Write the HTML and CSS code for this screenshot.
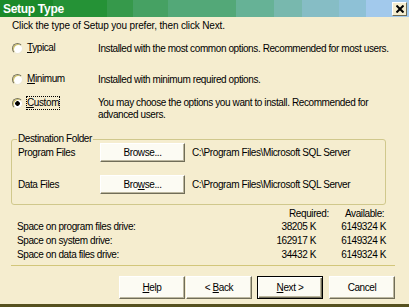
FILE: index.html
```html
<!DOCTYPE html>
<html lang="en">
<head>
    <meta charset="UTF-8">
    <title>Setup Type</title>
    <link rel="stylesheet" href="styles.css">
</head>
<body>
    <div class="window">
        <div class="titlebar">
            <span class="title">Setup Type</span>
            <span class="close-btn">
                <svg width="8" height="8" viewBox="0 0 8 8"><path d="M0.5 0.5L7.5 7.5M7.5 0.5L0.5 7.5" stroke="#000" stroke-width="2"/></svg>
            </span>
        </div>

        <div class="content">
            <p class="intro">Click the type of Setup you prefer, then click Next.</p>

            <div class="options">
                <div class="option opt-typical">
                    <span class="choice"><span class="radio"></span><span><u>T</u>ypical</span></span>
                    <p class="desc">Installed with the most common options. Recommended for most users.</p>
                </div>
                <div class="option opt-minimum">
                    <span class="choice"><span class="radio"></span><span><u>M</u>inimum</span></span>
                    <p class="desc">Installed with minimum required options.</p>
                </div>
                <div class="option opt-custom">
                    <span class="choice"><span class="radio on"></span><span class="focus"><u>C</u>ustom</span></span>
                    <p class="desc">You may choose the options you want to install. Recommended for<br>advanced users.</p>
                </div>
            </div>

            <fieldset class="dest">
                <legend>Destination Folder</legend>
                <div class="folders">
                    <div class="folder-row">
                        <span>Program Files</span>
                        <button class="btn browse">Browse...</button>
                        <span class="path">C:\Program Files\Microsoft SQL Server</span>
                    </div>
                    <div class="folder-row">
                        <span>Data Files</span>
                        <button class="btn browse">Bro<u>w</u>se...</button>
                        <span class="path">C:\Program Files\Microsoft SQL Server</span>
                    </div>
                </div>
            </fieldset>

            <div class="space-head">
                <span class="head-req">Required:</span>
                <span>Available:</span>
            </div>
            <div class="space">
                <span>Space on program files drive:</span><span class="num">38205 K</span><span class="num">6149324 K</span>
                <span>Space on system drive:</span><span class="num">162917 K</span><span class="num">6149324 K</span>
                <span>Space on data files drive:</span><span class="num">34432 K</span><span class="num">6149324 K</span>
            </div>

            <div class="separator"></div>

            <div class="buttons">
                <button class="btn"><u>H</u>elp</button>
                <button class="btn btn-back">&lt; <u>B</u>ack</button>
                <button class="btn btn-next btn-default"><u>N</u>ext &gt;</button>
                <button class="btn btn-cancel">Cancel</button>
            </div>
        </div>
    </div>
</body>
</html>
```

FILE: styles.css
```css
*{
    padding: 0;
    margin: 0;
    box-sizing: border-box;
}
body{
    width: 409px;
    height: 307px;
    overflow: hidden;
    background-color: #f5edcf;
    font-family: "Liberation Sans", Arial, sans-serif;
    font-size: 10px;
    letter-spacing: -0.4px;
    color: #000;
}

.window{
    height: 307px;
    display: flex;
    flex-direction: column;
    border-bottom: 3px solid #56511f;
}

.titlebar{
    height: 17px;
    flex-shrink: 0;
    display: flex;
    justify-content: space-between;
    align-items: center;
    padding: 0 2px 0 3px;
    background: linear-gradient(to right,
        #1b8a2a 0 53px, #259236 53px 107px, #36994b 107px 133px,
        #46a163 133px 168px, #53a878 168px 236px, #66b296 236px 274px,
        #78b8ae 274px 302px, #86bdc5 302px 339px, #8ec1d6 339px 366px,
        #a2c9ec 366px);
}

.title{
    color: white;
    font-weight: bold;
    font-size: 12px;
    letter-spacing: -0.3px;
}

.close-btn{
    width: 15px;
    height: 14px;
    background-color: #f5edcf;
    border: 1px solid;
    border-color: #fff #6d6a55 #6d6a55 #fff;
    display: flex;
    justify-content: center;
    align-items: center;
}

.content{
    flex: 1;
    padding-left: 12px;
    display: flex;
    flex-direction: column;
}

.intro{
    line-height: 14px;
    margin-top: 2px;
    letter-spacing: -0.15px;
}

.options{
    margin-top: 9px;
    display: flex;
    flex-direction: column;
}

.option{
    display: grid;
    grid-template-columns: 86px 1fr;
    line-height: 14px;
}

.opt-minimum{
    margin-top: 17px;
}

.opt-custom{
    margin-top: 10px;
    line-height: 12px;
}

.choice{
    display: flex;
    align-items: center;
    gap: 4px;
    height: 12px;
}

.radio{
    width: 11px;
    height: 11px;
    border-radius: 50%;
    background: #fff;
    border: 1px solid;
    border-color: #77735c #efe9d2 #efe9d2 #77735c;
    box-shadow: inset 1px 1px 0 #d2c66e;
}

.radio.on{
    background: radial-gradient(circle, #000 0 2px, #fff 2.6px);
}

.focus{
    outline: 1px dotted #000;
    line-height: 12px;
}

.dest{
    margin: 11px 0 0 -1px;
    width: 375px;
    border: 1px solid #d0c88c;
    border-radius: 3px;
    padding: 0 5px 10px 5px;
}

.dest legend{
    padding: 0 1px;
    line-height: 14px;
}

.folders{
    margin-top: -3px;
    display: flex;
    flex-direction: column;
    gap: 13px;
}

.folder-row{
    display: grid;
    grid-template-columns: 82px 85px 1fr;
    align-items: center;
    padding-left: 1px;
    height: 19px;
}

.path{
    margin-left: 7px;
}

.btn{
    font: inherit;
    letter-spacing: inherit;
    color: #000;
    height: 23px;
    width: 66px;
    background-color: #fcfbf3;
    border: 1px solid;
    border-color: #fff #706d58 #706d58 #fff;
    box-shadow: inset -1px -1px 0 #bcb79f;
    cursor: pointer;
}

.browse{
    height: 19px;
    width: 85px;
}

.space-head{
    display: flex;
    margin-top: 3px;
    padding-left: 277px;
    line-height: 12px;
}

.head-req{
    width: 56px;
}

.space{
    display: grid;
    grid-template-columns: 239px 60px 70px;
    padding-left: 5px;
    line-height: 14px;
}

.num{
    text-align: right;
}

.separator{
    margin: 3px 0 0 -1px;
    width: 384px;
    border-top: 1px solid #d2c67a;
}

.buttons{
    margin: 10px 14px 0 0;
    display: flex;
    justify-content: flex-end;
}

.btn-back{
    margin-left: 1px;
}

.btn-next{
    margin-left: 5px;
}

.btn-cancel{
    margin-left: 6px;
}

.btn-default{
    border-color: #000;
    box-shadow: inset 1px 1px 0 #fff, inset -1px -1px 0 #706d58, inset -2px -2px 0 #bcb79f;
}
```
